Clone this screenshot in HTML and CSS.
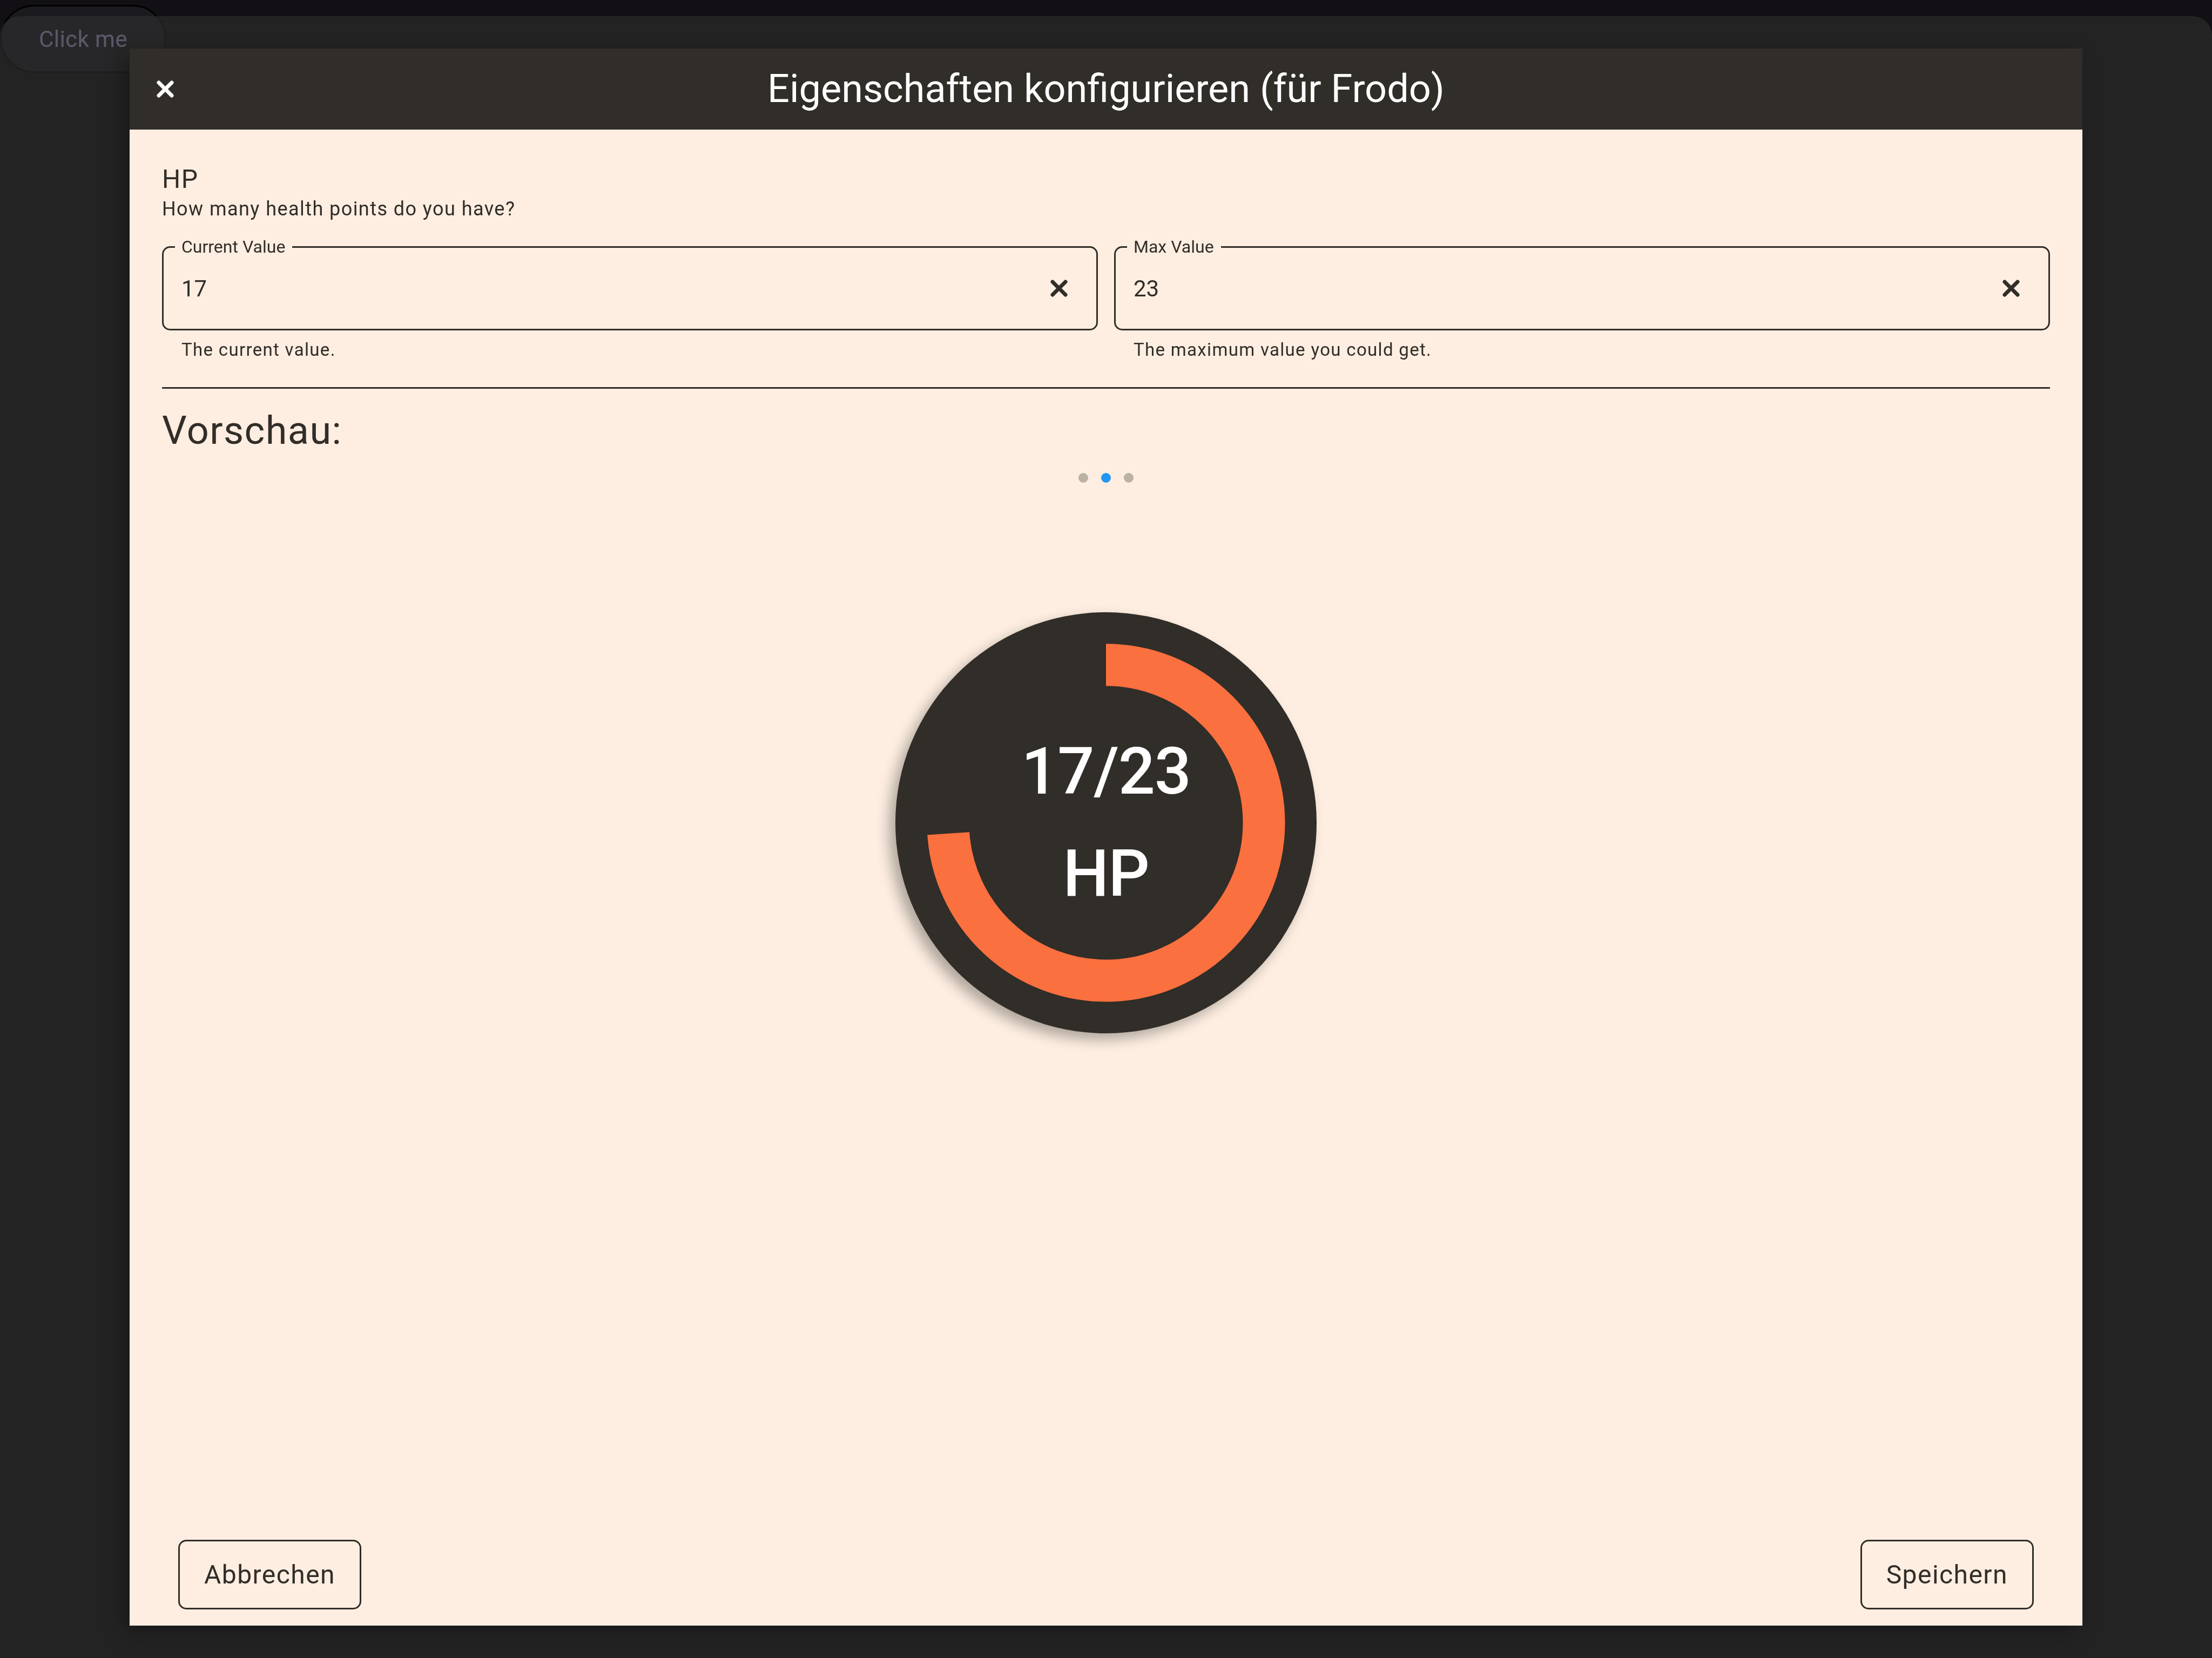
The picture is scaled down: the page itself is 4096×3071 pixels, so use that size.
FILE: index.html
```html
<!DOCTYPE html>
<html lang="de">
<head>
<meta charset="utf-8">
<title>Eigenschaften konfigurieren</title>
<link rel="stylesheet" href="styles.css">
</head>
<body>
<button class="click-me" type="button">Click me</button>

<div class="sheet">
  <section class="modal" role="dialog" aria-labelledby="modal-title">
    <header class="modal-header">
      <button class="icon-button" type="button" aria-label="Schließen">
        <svg class="cross" viewBox="0 0 32 32" aria-hidden="true"><path d="M4 4 28 28M28 4 4 28"/></svg>
      </button>
      <h1 class="modal-title" id="modal-title">Eigenschaften konfigurieren (für Frodo)</h1>
    </header>

    <div class="modal-body">
      <h2 class="stat-name">HP</h2>
      <p class="stat-hint">How many health points do you have?</p>

      <div class="fields">
        <div class="field">
          <fieldset class="outline">
            <legend class="notch"><label for="current">Current Value</label></legend>
            <div class="input-row">
              <input class="input" id="current" type="text" value="17" aria-describedby="current-help">
              <button class="icon-button" type="button" aria-label="Current Value leeren">
                <svg class="cross" viewBox="0 0 32 32" aria-hidden="true"><path d="M4 4 28 28M28 4 4 28"/></svg>
              </button>
            </div>
          </fieldset>
          <p class="helper" id="current-help">The current value.</p>
        </div>
        <div class="field">
          <fieldset class="outline">
            <legend class="notch"><label for="max">Max Value</label></legend>
            <div class="input-row">
              <input class="input" id="max" type="text" value="23" aria-describedby="max-help">
              <button class="icon-button" type="button" aria-label="Max Value leeren">
                <svg class="cross" viewBox="0 0 32 32" aria-hidden="true"><path d="M4 4 28 28M28 4 4 28"/></svg>
              </button>
            </div>
          </fieldset>
          <p class="helper" id="max-help">The maximum value you could get.</p>
        </div>
      </div>

      <hr class="divider">

      <h2 class="preview-title">Vorschau:</h2>
      <div class="dots">
        <span class="dot"></span>
        <span class="dot dot-active"></span>
        <span class="dot"></span>
      </div>

      <div class="gauge">
        <svg class="gauge-ring" viewBox="0 0 780 780" aria-hidden="true">
          <circle cx="390" cy="390" r="292.5" pathLength="23" stroke-dasharray="17 23" transform="rotate(-90 390 390)"/>
        </svg>
        <div class="gauge-text">
          <span>17/23</span>
          <span>HP</span>
        </div>
      </div>
    </div>

    <footer class="modal-footer">
      <button class="button" type="button">Abbrechen</button>
      <button class="button" type="button">Speichern</button>
    </footer>
  </section>
</div>
</body>
</html>
```
FILE: styles.css
```css
:root {
  --ink: #312d28;
  --paper: #fdeee1;
  --accent: #fb703f;
}

* {
  box-sizing: border-box;
}

body {
  margin: 0;
  min-height: 100vh;
  overflow: hidden;
  background: #121014;
  font-family: Roboto, "Liberation Sans", sans-serif;
  color: var(--ink);
}

h1, h2, p {
  margin: 0;
  font-weight: 400;
}

button, input {
  font: inherit;
  color: inherit;
}

.click-me {
  display: block;
  margin-top: 9px;
  height: 126px;
  padding: 0 69px;
  border: 3px solid #000;
  border-radius: 63px;
  background: #1b1a1e;
  color: #b6aadc;
  font-size: 42px;
  letter-spacing: 0.01em;
}

/* Translucent sheet above the page, holding the dialog */
.sheet {
  position: fixed;
  inset: 30px 0 0;
  display: flex;
  padding: 60px 240px;
  border-radius: 36px 36px 0 0;
  background: rgba(45, 45, 45, 0.66);
}

.modal {
  flex: 1;
  display: flex;
  flex-direction: column;
  background: var(--paper);
  box-shadow: -12px 12px 36px rgba(0, 0, 0, 0.3);
}

.modal-header {
  display: grid;
  grid-template-columns: 72px 1fr 72px;
  align-items: center;
  height: 150px;
  padding: 0 30px;
  background: var(--ink);
  color: #fff;
}

.modal-title {
  font-size: 72px;
  line-height: 84px;
  text-align: center;
}

.icon-button {
  display: flex;
  align-items: center;
  justify-content: center;
  width: 72px;
  height: 72px;
  padding: 0;
  border: 0;
  background: none;
}

.cross {
  width: 32px;
  height: 32px;
  fill: none;
  stroke: currentColor;
  stroke-width: 7;
  stroke-linecap: round;
}

.modal-body {
  flex: 1;
  padding: 60px 60px 0;
}

.stat-name {
  font-size: 48px;
  line-height: 63px;
  letter-spacing: 0.03em;
}

.stat-hint {
  font-size: 36px;
  line-height: 48px;
  letter-spacing: 0.04em;
}

.fields {
  display: flex;
  gap: 30px;
  margin-top: 27px;
}

.field {
  flex: 1;
}

.outline {
  min-width: 0;
  margin: 0;
  padding: 0 33px 15px;
  border: 3px solid var(--ink);
  border-radius: 15px;
}

.notch {
  margin-left: -12px;
  padding: 0 13px 0 12px;
  font-size: 32px;
  line-height: 39px;
}

.input-row {
  display: flex;
  align-items: center;
  height: 114px;
  margin-bottom: 3px;
}

.input {
  flex: 1;
  min-width: 0;
  padding: 0;
  border: 0;
  outline: 0;
  background: none;
  font-size: 42px;
}

.helper {
  margin: 18px 36px 0;
  font-size: 33px;
  line-height: 36px;
  letter-spacing: 0.04em;
}

.divider {
  height: 3px;
  margin: 51px 0 0;
  border: 0;
  background: var(--ink);
}

.preview-title {
  margin-top: 36px;
  font-size: 72px;
  line-height: 84px;
  letter-spacing: 0.02em;
}

.dots {
  display: flex;
  justify-content: center;
  gap: 24px;
  margin-top: 36px;
}

.dot {
  width: 18px;
  height: 18px;
  border-radius: 50%;
  background: #bbb1a6;
}

.dot-active {
  background: #2196f3;
}

.gauge {
  display: grid;
  place-items: center;
  width: 780px;
  height: 780px;
  margin: 240px auto 0;
  border-radius: 50%;
  background: var(--ink);
  box-shadow: -12px 12px 24px rgba(0, 0, 0, 0.3);
}

.gauge-ring,
.gauge-text {
  grid-area: 1 / 1;
}

.gauge-ring {
  width: 100%;
  height: 100%;
  fill: none;
  stroke: var(--accent);
  stroke-width: 78;
}

.gauge-text {
  display: flex;
  flex-direction: column;
  align-items: center;
  color: #fff;
  font-size: 120px;
  font-weight: 500;
  line-height: 189px;
  letter-spacing: -0.01em;
}

.modal-footer {
  display: flex;
  justify-content: space-between;
  padding: 0 90px 30px;
}

.button {
  height: 129px;
  padding: 0 45px;
  border: 3px solid var(--ink);
  border-radius: 15px;
  background: none;
  font-size: 48px;
  letter-spacing: 0.03em;
}
```
